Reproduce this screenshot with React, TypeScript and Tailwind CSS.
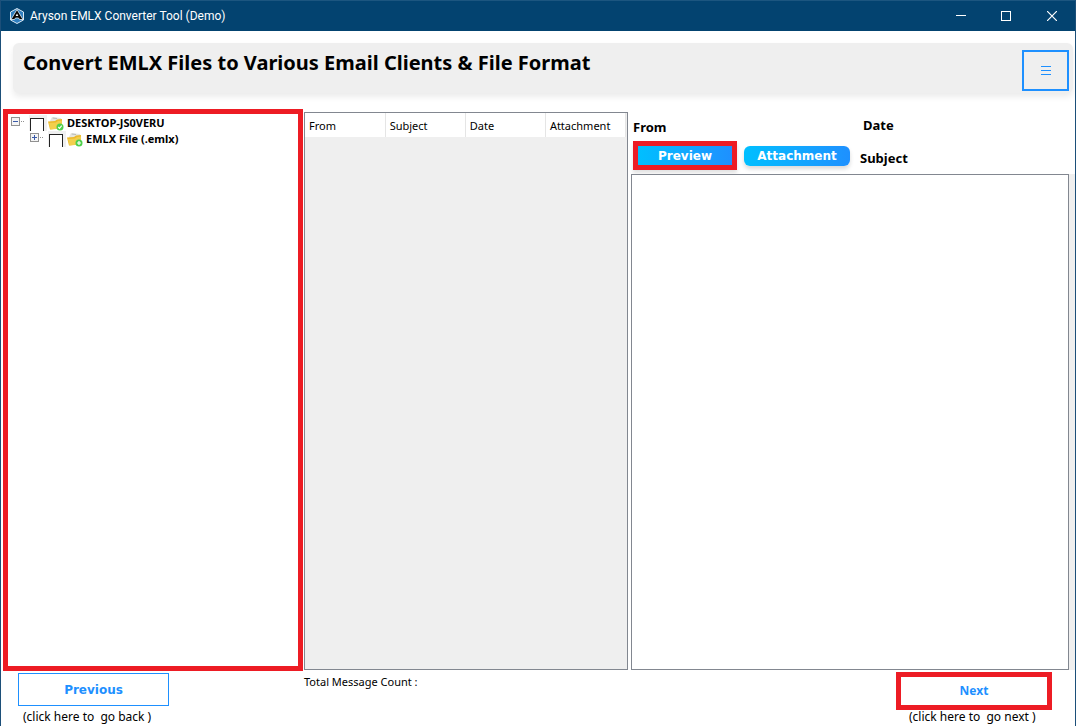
import React, { useState } from 'react';

const columns = ['From', 'Subject', 'Date', 'Attachment'];

const AppLogo = () => (
  <svg width="16" height="18" viewBox="0 0 16 18" aria-hidden="true">
    <path d="M8 1.500 14.500 5v8L8 16.500 1.500 13V5z" fill="#2f7fc0" stroke="#d8e8f4" strokeWidth="1" />
    <path d="M8 2.500 2 12.500h3.500L6.500 11h3l1 1.500H14z" fill="#050505" stroke="#e8f2fa" strokeWidth="0.8" />
    <path d="M8 6.500 6.700 9h2.600z" fill="#fff" />
  </svg>
);

const FolderIcon = ({ type }: { type: 'check' | 'plus' }) => (
  <svg width="16" height="15" viewBox="0 0 16 15" aria-hidden="true" className="shrink-0">
    <path d="M2 5 4 1l9 1 1 4-2 2H3z" fill="#e6e6df" />
    <path d="M5 1.500 9 2v1L4.500 2.500z" fill="#b9bcb8" />
    <path d="M0 5.500 7 5l2-1.500 5-.5v9L2 13.500z" fill="#ecb92c" />
    <path d="M1 7 8 6.500 10 5l4-.5v8L2.500 13.500z" fill="#f3cf4c" />
    <circle cx="12" cy="11" r="3.500" fill="#4fd04b" />
    {type === 'check' ? (
      <path d="m10.300 11 1.200 1.300 2.200-2.600" fill="none" stroke="#fff" strokeWidth="1.200" />
    ) : (
      <path d="M10 11h4M12 9v4" fill="none" stroke="#fff" strokeWidth="1.200" />
    )}
  </svg>
);

const Expander = ({ open, label }: { open: boolean; label: string }) => (
  <button type="button" aria-label={label} className="flex h-4 w-[14px] shrink-0 items-start pt-[2px]">
    <svg width="14" height="9" viewBox="0 0 14 9" aria-hidden="true" shapeRendering="crispEdges">
      <rect x="0.5" y="0.5" width="8" height="8" fill="#f4f4f4" stroke="#919191" />
      <path d="M2 4.500h5" stroke="#3a5aa8" />
      {!open && <path d="M4.500 2v5" stroke="#3a5aa8" />}
      <path d="M10 4.500h1M12 4.500h1" stroke="#909090" />
    </svg>
  </button>
);

const TreeRow = ({ label, type, open }: { label: string; type: 'check' | 'plus'; open: boolean }) => (
  <div className="flex h-4 items-center">
    <Expander open={open} label={`Toggle ${label}`} />
    <label className="flex h-4 items-center text-[11px] leading-4 font-bold whitespace-nowrap">
      <span className="ml-1 flex h-4 w-[18px] items-end justify-start overflow-hidden bg-[#f0f0f0] pl-px">
        <input type="checkbox" className="h-[13px] w-[14px] appearance-none border border-b-0 border-[#222] bg-white checked:bg-[#1e90ff]" />
      </span>
      <span className="ml-px"><FolderIcon type={type} /></span>
      <span className="ml-[3px]">{label}</span>
    </label>
  </div>
);

const App = () => {
  const [tab, setTab] = useState('preview');

  return (
    <div className="flex min-h-screen flex-col border-x border-[#1c4f79] bg-white font-['Noto_Sans',sans-serif] text-black">
      <header className="flex h-[31px] items-center justify-between border-t border-[#1c5680] bg-[#034370] pl-2 text-white">
        <div className="flex items-center gap-[5px]">
          <AppLogo />
          <span className="font-['Roboto',sans-serif] text-[12px] leading-4">Aryson EMLX Converter Tool (Demo)</span>
        </div>
        <div className="flex h-full">
          <button type="button" aria-label="Minimize" className="flex w-[45px] items-center justify-center">
            <svg width="10" height="10" shapeRendering="crispEdges"><path d="M0 4.500h10" stroke="#fff" /></svg>
          </button>
          <button type="button" aria-label="Maximize" className="flex w-[45px] items-center justify-center">
            <svg width="10" height="10" shapeRendering="crispEdges"><rect x="0.5" y="0.5" width="9" height="9" fill="none" stroke="#fff" /></svg>
          </button>
          <button type="button" aria-label="Close" className="flex w-[47px] items-center justify-center">
            <svg width="10" height="10"><path d="m0 0 10 10M10 0 0 10" stroke="#fff" strokeWidth="1.200" /></svg>
          </button>
        </div>
      </header>

      <div className="mt-3 mr-[2px] mb-4 ml-3 flex h-[50px] items-start justify-between rounded-md bg-[#efefef] pr-[4px] pl-[10px] shadow-[0_4px_6px_rgba(0,0,0,0.08)]">
        <h1 className="pt-[6px] text-[20px] leading-7 font-bold">Convert EMLX Files to Various Email Clients &amp; File Format</h1>
        <button type="button" aria-label="Menu" className="mt-[7px] flex h-[41px] w-[47px] items-center justify-center border-2 border-[#1e90ff]">
          <svg width="10" height="9" viewBox="0 0 10 9" shapeRendering="crispEdges"><path d="M0 .5h10M0 4.500h10M0 8.500h10" stroke="#1e90ff" /></svg>
        </button>
      </div>

      <main className="grid flex-1 grid-cols-[300fr_328fr_444fr] pl-[2px]">
        <div className="border-5 border-[#ed1c24] px-[3px] pt-px">
          <TreeRow label="DESKTOP-JS0VERU" type="check" open />
          <div className="pl-[19px]">
            <TreeRow label="EMLX File (.emlx)" type="plus" open={false} />
          </div>
        </div>

        <div className="mt-[3px] mr-[3px] mb-px ml-px border border-[#828790] bg-[#efefef] pr-px">
          <table className="w-full table-fixed border-collapse bg-white text-[11px]">
            <thead>
              <tr>
                {columns.map(c => (
                  <th key={c} className="h-6 border-r border-[#e5e5e5] px-1 pt-[2px] text-left leading-4 font-normal">{c}</th>
                ))}
              </tr>
            </thead>
          </table>
        </div>

        <div className="flex min-w-0 flex-col pb-px">
          <div className="flex h-[65px] justify-between">
            <div className="w-[229px] shrink-0 pl-[2px]">
              <p className="pt-[10px] text-[13px] leading-4 font-bold">From</p>
              <div className="mt-[6px] flex items-center gap-[7px] font-['DejaVu_Sans',sans-serif] text-[12px] leading-4 font-bold text-white">
                <button type="button" onClick={() => setTab('preview')} aria-pressed={tab === 'preview'} className="h-[29px] w-[104px] border-5 border-[#ed1c24] bg-linear-to-r from-[#00bfff] to-[#1e90ff] shadow-[0_3px_4px_rgba(0,0,0,0.12)]">Preview</button>
                <button type="button" onClick={() => setTab('attachment')} aria-pressed={tab === 'attachment'} className="h-5 w-[106px] rounded-md bg-linear-to-r from-[#00bfff] to-[#1e90ff] shadow-[0_3px_4px_rgba(0,0,0,0.15)]">Attachment</button>
              </div>
            </div>
            <div className="flex-1 text-[13px] leading-4 font-bold">
              <p className="pt-2 pl-[3px]">Date</p>
              <p className="pt-[17px]">Subject</p>
            </div>
          </div>
          <div className="flex flex-1 bg-[#efefef] pr-[6px]">
            <textarea aria-label="Message preview" readOnly className="flex-1 resize-none border border-[#828790] bg-white outline-none" />
          </div>
        </div>
      </main>

      <footer className="grid h-[55px] grid-cols-[300fr_328fr_444fr] pl-[2px] text-[12px] leading-4">
        <div className="pt-[2px] pl-[15px]">
          <button type="button" className="block h-[33px] w-[151px] border border-[#1e90ff] font-['DejaVu_Sans',sans-serif] font-bold text-[#1e90ff]">Previous</button>
          <p className="pt-[3px] pl-[5px] whitespace-pre">(click here to  go back )</p>
        </div>
        <p className="pt-[3px] pl-px text-[11px]">Total Message Count :</p>
        <div className="flex flex-col items-end pt-px pr-[23px]">
          <div className="w-[156px]">
            <button type="button" className="block h-[38px] w-full border-5 border-[#ed1c24] font-bold text-[#1e90ff]">Next</button>
            <p className="-mt-px pl-[13px] whitespace-pre">(click here to  go next )</p>
          </div>
        </div>
      </footer>
    </div>
  );
};

export default App;
